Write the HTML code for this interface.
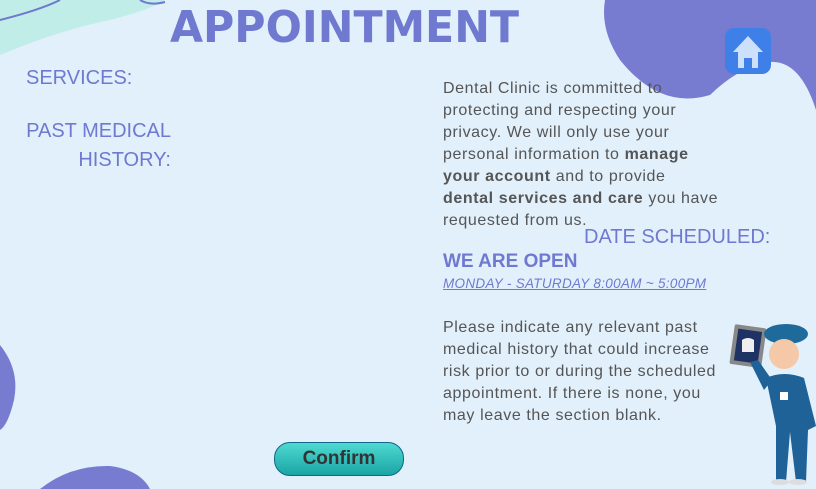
<!DOCTYPE html><html><head><style>
body{margin:0;width:816px;height:489px;overflow:hidden;background:#e1f0fb;position:relative;font-family:"Liberation Sans",sans-serif}
.a{position:absolute;white-space:nowrap}
.t{color:#555;font-size:16px;line-height:22px;letter-spacing:0.6px}
.l{color:#7079d0;font-size:20px}
</style></head><body>
<svg class="a" style="left:0;top:0" width="816" height="489">
<path d="M0 0H165Q150 10 110 20 60 30 0 55Z" fill="#c1ede8"/>
<path d="M0 20Q40 10 60 0" stroke="#7078cf" stroke-width="2" fill="none"/>
<path d="M140 0Q150 6 165 2" stroke="#7078cf" stroke-width="2" fill="none"/>
<path d="M605 0H816V110Q800 60 770 62 740 66 710 95 660 110 620 60 600 30 605 0Z" fill="#787cd1"/>
<path d="M0 345Q20 370 14 400 8 425 0 430Z" fill="#787cd1"/>
<path d="M40 489Q70 465 110 466 140 470 150 489Z" fill="#787cd1"/>
<rect x="725" y="28" width="46" height="46" rx="9" fill="#3f7fe8"/>
<path d="M733 52L748 36 763 52H758V68H752V58H744V68H738V52Z" fill="#cde0fb"/>
<g transform="translate(730,322)">
<rect x="2" y="4" width="32" height="40" rx="2" fill="#888" transform="rotate(8 17 24)"/>
<rect x="6" y="8" width="24" height="32" fill="#1e3264" transform="rotate(8 17 24)"/>
<path d="M12 18q6-4 12 0v12h-12z" fill="#eee"/>
<ellipse cx="56" cy="12" rx="22" ry="10" fill="#1d6a9b"/>
<circle cx="54" cy="32" r="15" fill="#f5c9a8"/>
<path d="M36 56q18-8 38 0l12 48-8 4-2 52h-10l-6-50-4 50h-10l0-56z" fill="#1f6297"/>
<path d="M20 40l8-2 14 20-8 10z" fill="#1f6297"/>
<rect x="50" y="70" width="8" height="8" fill="#fff"/>
<ellipse cx="50" cy="160" rx="9" ry="3" fill="#ddd"/><ellipse cx="68" cy="160" rx="9" ry="3" fill="#ddd"/>
</g>
</svg>
<div class="a" style="left:170px;top:2px;font:900 44px 'DejaVu Sans',sans-serif;color:#7079d0;transform:scaleX(0.97);transform-origin:left">APPOINTMENT</div>
<div class="a l" style="left:26px;top:67px">SERVICES:</div>
<div class="a l" style="left:25px;top:117px;text-align:right;width:146px;line-height:29px">PAST MEDICAL<br>HISTORY:</div>
<div class="a t" style="left:443px;top:78px">Dental Clinic is committed to<br>protecting and respecting your<br>privacy. We will only use your<br>personal information to <b>manage</b><br><b>your account</b> and to provide<br><b>dental services and care</b> you have<br>requested from us.</div>
<div class="a l" style="left:584px;top:226px">DATE SCHEDULED:</div>
<div class="a" style="left:443px;top:251px;color:#7079d0;font-weight:bold;font-size:19px">WE ARE OPEN</div>
<div class="a" style="left:443px;top:276px;color:#7079d0;font-size:13.5px;font-style:italic;text-decoration:underline;letter-spacing:0.3px">MONDAY - SATURDAY 8:00AM ~ 5:00PM</div>
<div class="a t" style="left:443px;top:317px">Please indicate any relevant past<br>medical history that could increase<br>risk prior to or during the scheduled<br>appointment. If there is none, you<br>may leave the section blank.</div>
<div class="a" style="left:274px;top:442px;width:128px;height:32px;border-radius:16px;background:linear-gradient(#4fd9d2,#1aa5a5);border:1px solid #168;text-align:center;line-height:32px;font-weight:bold;font-size:19px;color:#333">Confirm</div>
</body></html>
